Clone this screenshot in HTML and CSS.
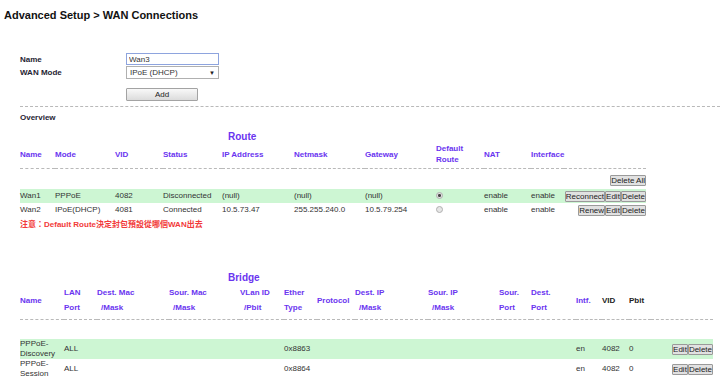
FILE: index.html
```html
<!DOCTYPE html>
<html lang="en">
<head>
  <meta charset="UTF-8">
  <title>WAN Connections</title>
  <link rel="stylesheet" href="styles.css">
</head>
<body>

<div class="title">Advanced Setup &gt; WAN Connections</div>

<div class="page">
  <div class="form">
    <div class="label">Name</div>
    <input class="text-box" type="text" value="Wan3">
    <div class="label">WAN Mode</div>
    <div class="select"><span>IPoE (DHCP)</span><span class="arrow">&#9660;</span></div>
    <div></div>
    <button class="add">Add</button>
  </div>

  <div class="rule"></div>
  <div class="section">Overview</div>

  <div class="caption">Route</div>
  <table class="grid route">
    <colgroup>
      <col style="width:35px"><col style="width:60px"><col style="width:48px"><col style="width:59px">
      <col style="width:72px"><col style="width:71px"><col style="width:71px"><col style="width:48px">
      <col style="width:47px"><col style="width:33px"><col style="width:82px">
    </colgroup>
    <tr class="head">
      <th>Name</th><th>Mode</th><th>VID</th><th>Status</th><th>IP Address</th><th>Netmask</th>
      <th>Gateway</th><th>Default<br>Route</th><th>NAT</th><th>Interface</th><th></th>
    </tr>
    <tr class="sep"><td colspan="11"></td></tr>
    <tr class="tools"><td colspan="11"><button class="small">Delete All</button></td></tr>
    <tr class="row on">
      <td>Wan1</td><td>PPPoE</td><td>4082</td><td>Disconnected</td><td>(null)</td><td>(null)</td>
      <td>(null)</td><td><span class="radio checked"></span></td><td>enable</td><td>enable</td>
      <td class="acts"><button class="small">Reconnect</button><button class="small">Edit</button><button class="small">Delete</button></td>
    </tr>
    <tr class="row">
      <td>Wan2</td><td>IPoE(DHCP)</td><td>4081</td><td>Connected</td><td>10.5.73.47</td><td>255.255.240.0</td>
      <td>10.5.79.254</td><td><span class="radio"></span></td><td>enable</td><td>enable</td>
      <td class="acts"><button class="small">Renew</button><button class="small">Edit</button><button class="small">Delete</button></td>
    </tr>
  </table>
  <div class="note">注意：Default Route決定封包預設從哪個WAN出去</div>

  <div class="caption bridge-cap">Bridge</div>
  <table class="grid bridge">
    <colgroup>
      <col style="width:44px"><col style="width:33px"><col style="width:72px"><col style="width:71px">
      <col style="width:44px"><col style="width:33px"><col style="width:38px"><col style="width:73px">
      <col style="width:71px"><col style="width:32px"><col style="width:45px"><col style="width:26px">
      <col style="width:27px"><col style="width:22px"><col style="width:62px">
    </colgroup>
    <tr class="head">
      <th>Name</th>
      <th>LAN<br>Port</th>
      <th>Dest. Mac<br><span class="ind">/Mask</span></th>
      <th>Sour. Mac<br><span class="ind">/Mask</span></th>
      <th>VLan ID<br><span class="ind">/Pbit</span></th>
      <th>Ether<br>Type</th>
      <th>Protocol</th>
      <th>Dest. IP<br><span class="ind">/Mask</span></th>
      <th>Sour. IP<br><span class="ind">/Mask</span></th>
      <th>Sour.<br>Port</th>
      <th>Dest.<br>Port</th>
      <th>Intf.</th>
      <th class="plain">VID</th>
      <th class="plain">Pbit</th>
      <th></th>
    </tr>
    <tr class="sep"><td colspan="15"></td></tr>
    <tr class="gap"><td colspan="15"></td></tr>
    <tr class="row tall on">
      <td>PPPoE-<br>Discovery</td><td>ALL</td><td></td><td></td><td></td><td>0x8863</td><td></td><td></td>
      <td></td><td></td><td></td><td>en</td><td>4082</td><td>0</td>
      <td class="acts"><button class="small">Edit</button><button class="small">Delete</button></td>
    </tr>
    <tr class="row tall">
      <td>PPPoE-<br>Session</td><td>ALL</td><td></td><td></td><td></td><td>0x8864</td><td></td><td></td>
      <td></td><td></td><td></td><td>en</td><td>4082</td><td>0</td>
      <td class="acts"><button class="small">Edit</button><button class="small">Delete</button></td>
    </tr>
  </table>
</div>

</body>
</html>
```

FILE: styles.css
```css
body {
  margin: 0;
  background: #fff;
  font-family: "Liberation Sans", Arial, "Noto Sans CJK TC", sans-serif;
  font-size: 8px;
  color: #333;
}

.title {
  height: 30px;
  line-height: 30px;
  padding-left: 4px;
  font-size: 11px;
  font-weight: bold;
  color: #111;
}

.page {
  padding-left: 20px;
}

/* add form */
.form {
  display: grid;
  grid-template-columns: 106px 93px;
  row-gap: 1px;
  align-items: center;
  margin-top: 23px;
}

.label {
  font-weight: bold;
  color: #1f2433;
}

.text-box {
  box-sizing: border-box;
  width: 93px;
  height: 12px;
  margin: 0;
  padding: 0 2px;
  border: 1px solid #8ea4de;
  font-family: inherit;
  font-size: 8px;
  color: #333;
  outline: none;
}

.select {
  box-sizing: border-box;
  display: flex;
  justify-content: space-between;
  align-items: center;
  height: 13px;
  padding: 0 3px 0 3px;
  border: 1px solid #b0b0b0;
  color: #333;
}

.arrow {
  font-size: 6px;
  color: #222;
}

.add {
  box-sizing: border-box;
  width: 72px;
  height: 13px;
  margin-top: 8px;
  padding: 0;
  border: 1px solid #a3a3a3;
  border-radius: 1px;
  background: linear-gradient(#f8f8f8, #dcdcdc);
  font-family: inherit;
  font-size: 8px;
  color: #222;
}

.rule {
  margin-top: 5px;
  border-top: 1px dashed #b9b9b9;
}

.section {
  margin-top: 5px;
  line-height: 12px;
  font-weight: bold;
  color: #1f2433;
}

.caption {
  margin-top: 6px;
  height: 13px;
  line-height: 13px;
  padding-left: 208px;
  font-size: 10px;
  font-weight: bold;
  color: #6a34f0;
}

.bridge-cap {
  margin-top: 39px;
  height: 14px;
  line-height: 14px;
}

/* tables */
.grid {
  border-collapse: collapse;
  table-layout: fixed;
}

.grid th,
.grid td {
  padding: 0;
  text-align: left;
  vertical-align: middle;
  white-space: nowrap;
}

.route {
  width: 626px;
}

.bridge {
  width: 693px;
}

.head th {
  height: 22px;
  line-height: 11px;
  font-weight: bold;
  color: #6a34f0;
}

.bridge .head th {
  height: 30px;
  line-height: 15px;
}

.head th.plain {
  color: #222;
}

.ind {
  padding-left: 4px;
}

.sep td {
  height: 3px;
  border-bottom: 1px dashed #b9b9b9;
}

.bridge .sep td {
  height: 4px;
}

.gap td {
  height: 19px;
}

.grid .tools td {
  padding: 6px 0 3px;
  text-align: right;
}

.row td {
  height: 14px;
  line-height: 10px;
}

.row.tall td {
  height: 20px;
}

.row.on td {
  background: #cdf6d3;
}

.grid td.acts {
  text-align: right;
}

.small {
  box-sizing: border-box;
  height: 11px;
  margin: 0;
  padding: 0;
  border: 1px solid #9a9a9a;
  border-radius: 1px;
  background: #e1e1e1;
  font-family: inherit;
  font-size: 8px;
  line-height: 9px;
  color: #222;
  vertical-align: middle;
}

.radio {
  display: inline-block;
  box-sizing: border-box;
  width: 7px;
  height: 7px;
  border: 1px solid #b0b0b0;
  border-radius: 50%;
  background: #e6e6e6;
  vertical-align: middle;
}

.radio.checked {
  background: radial-gradient(circle, #444 0, #444 1.2px, #e0e0e0 1.8px);
}

.note {
  line-height: 15px;
  font-weight: bold;
  color: #f23a3a;
}
```
